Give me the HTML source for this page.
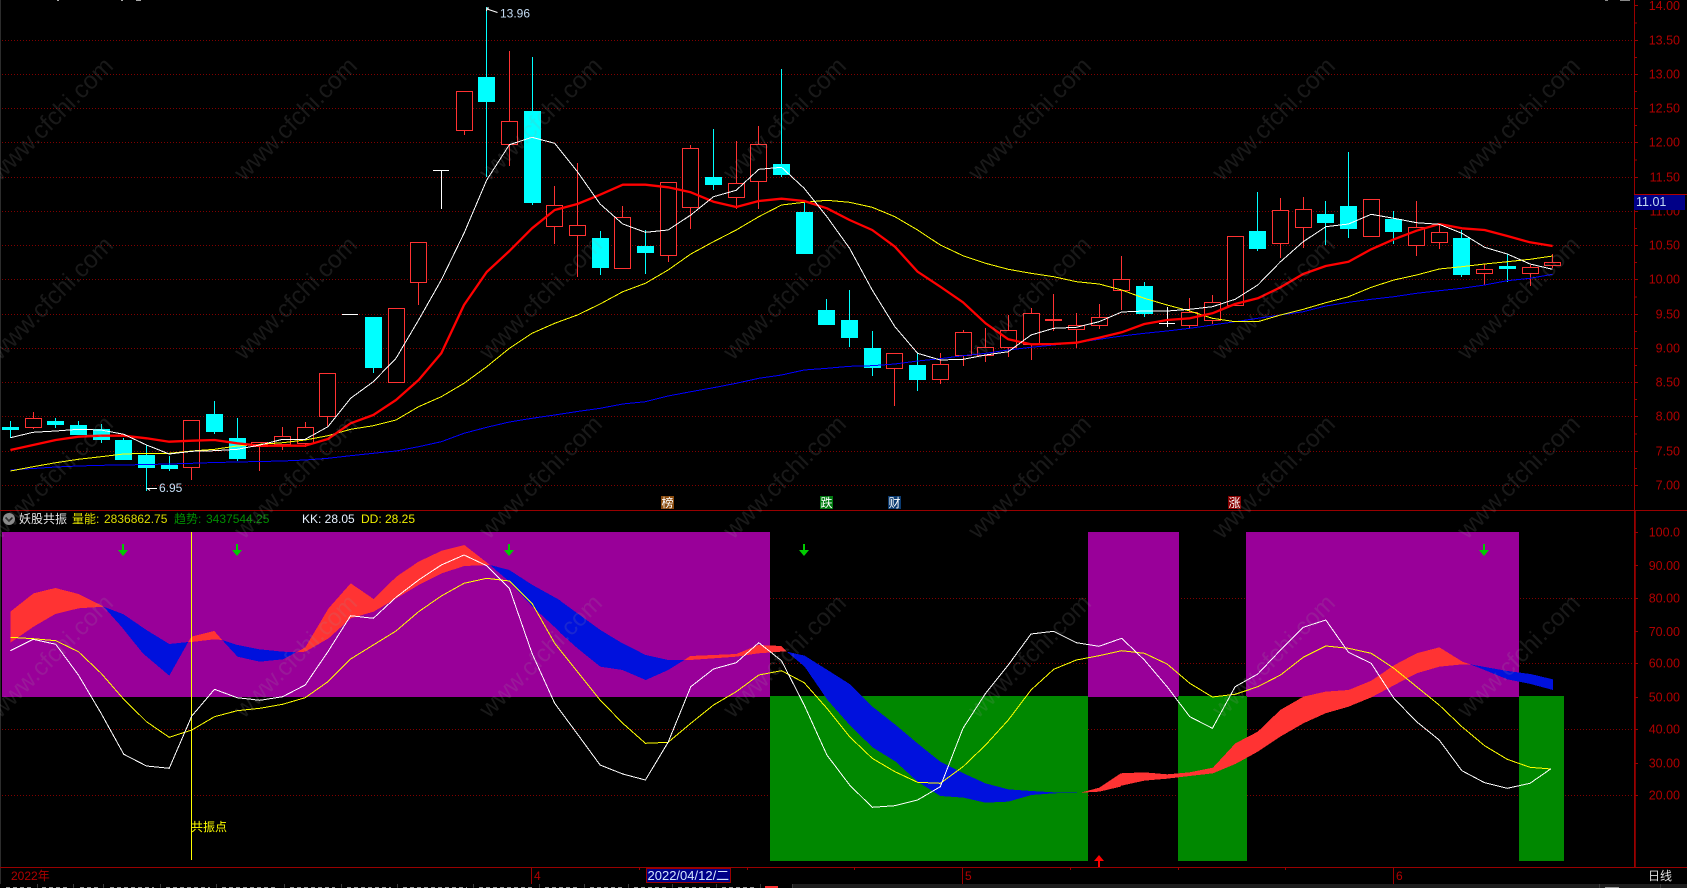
<!DOCTYPE html>
<html lang="zh"><head><meta charset="utf-8"><title>妖股共振</title>
<style>
html,body{margin:0;padding:0;background:#000;width:1687px;height:888px;overflow:hidden}
svg{display:block}
text{font-family:"Liberation Sans","Noto Sans CJK SC",sans-serif;font-size:12px}
.ax text{fill:#b00000;text-anchor:end;font-size:12.5px}
.wm text{font-size:24.5px;fill:#999;opacity:.16}
.ml{fill:none;stroke-linejoin:round}
.thin{shape-rendering:crispEdges}
</style></head><body>
<svg width="1687" height="888" viewBox="0 0 1687 888" xmlns="http://www.w3.org/2000/svg">
<rect width="1687" height="888" fill="#000"/>
<rect x="0" y="0" width="1" height="884" fill="#2c2c2c"/>
<!-- grid -->
<path stroke="#800000" stroke-width="1" stroke-dasharray="1 2" shape-rendering="crispEdges" fill="none" d="M2 40.5H1634M2 74.5H1634M2 108.5H1634M2 142.5H1634M2 177.5H1634M2 211.5H1634M2 245.5H1634M2 279.5H1634M2 314.5H1634M2 348.5H1634M2 382.5H1634M2 416.5H1634M2 451.5H1634M2 485.5H1634M2 598.5H1634M2 663.5H1634M2 729.5H1634M2 795.5H1634"/>
<!-- candles -->
<g shape-rendering="crispEdges">
<path fill="none" stroke="#00ffff" d="M10.5 421V438M55.5 418V428M78.5 421V435M101.5 424V443M123.5 438V460M146.5 445V491M169.5 456V471M214.5 401V434M237.5 418V461M373.5 368V373M486.5 7V177M532.5 57V205M600.5 231V275M645.5 230V274M713.5 129V190M781.5 69V177M804.5 203V212M826.5 299V310M849.5 290V347M872.5 331V376M917.5 353V391M1144.5 282V317M1257.5 192V251M1325.5 201V245M1348.5 152V238M1393.5 211V244M1461.5 230V277M1507.5 254V282"/>
<path fill="none" stroke="#ff3232" d="M33.5 412V429M191.5 420V480M259.5 442V471M282.5 427V450M305.5 422V447M327.5 373V426M418.5 242V305M464.5 91V135M509.5 51V166M554.5 186V244M577.5 163V277M622.5 206V269M668.5 182V262M690.5 145V229M736.5 141V209M758.5 126V209M894.5 353V406M940.5 353V384M963.5 330V366M985.5 328V362M1008.5 315V357M1031.5 308V360M1053.5 294V331M1076.5 313V348M1099.5 304V329M1121.5 256V310M1189.5 298V329M1212.5 295V324M1280.5 198V258M1303.5 197V248M1416.5 201V256M1439.5 223V249M1484.5 264V285M1530.5 265V286M1552.5 254V268"/>
<g fill="#00ffff">
<rect x="2" y="427" width="17" height="3"/><rect x="47" y="421" width="17" height="4"/><rect x="70" y="425" width="17" height="10"/><rect x="93" y="429" width="17" height="11"/><rect x="115" y="440" width="17" height="20"/><rect x="138" y="455" width="17" height="13"/><rect x="161" y="465" width="17" height="4"/><rect x="206" y="414" width="17" height="18"/><rect x="229" y="438" width="17" height="21"/><rect x="365" y="317" width="17" height="51"/><rect x="478" y="77" width="17" height="25"/><rect x="524" y="111" width="17" height="92"/><rect x="592" y="238" width="17" height="30"/><rect x="637" y="246" width="17" height="7"/><rect x="705" y="177" width="17" height="8"/><rect x="773" y="164" width="17" height="11"/><rect x="796" y="212" width="17" height="42"/><rect x="818" y="310" width="17" height="15"/><rect x="841" y="320" width="17" height="18"/><rect x="864" y="348" width="17" height="20"/><rect x="909" y="365" width="17" height="15"/><rect x="1136" y="286" width="17" height="28"/><rect x="1249" y="231" width="17" height="18"/><rect x="1317" y="214" width="17" height="9"/><rect x="1340" y="206" width="17" height="23"/><rect x="1385" y="219" width="17" height="13"/><rect x="1453" y="238" width="17" height="37"/><rect x="1499" y="266" width="17" height="3"/>
</g>
<g fill="#000" stroke="#ff3232">
<rect x="25.5" y="418.5" width="16" height="9"/><rect x="183.5" y="420.5" width="16" height="47"/><rect x="251.5" y="442.5" width="16" height="4"/><rect x="274.5" y="436.5" width="16" height="8"/><rect x="297.5" y="427.5" width="16" height="16"/><rect x="319.5" y="373.5" width="16" height="43"/><rect x="388.5" y="308.5" width="16" height="74"/><rect x="410.5" y="242.5" width="16" height="40"/><rect x="456.5" y="91.5" width="16" height="39"/><rect x="501.5" y="121.5" width="16" height="23"/><rect x="546.5" y="205.5" width="16" height="21"/><rect x="569.5" y="225.5" width="16" height="10"/><rect x="614.5" y="217.5" width="16" height="51"/><rect x="660.5" y="182.5" width="16" height="73"/><rect x="682.5" y="148.5" width="16" height="59"/><rect x="728.5" y="183.5" width="16" height="14"/><rect x="750.5" y="144.5" width="16" height="37"/><rect x="886.5" y="353.5" width="16" height="15"/><rect x="932.5" y="364.5" width="16" height="15"/><rect x="955.5" y="332.5" width="16" height="23"/><rect x="977.5" y="347.5" width="16" height="8"/><rect x="1000.5" y="330.5" width="16" height="17"/><rect x="1023.5" y="313.5" width="16" height="31"/><rect x="1068.5" y="325.5" width="16" height="4"/><rect x="1091.5" y="317.5" width="16" height="8"/><rect x="1113.5" y="279.5" width="16" height="11"/><rect x="1181.5" y="312.5" width="16" height="13"/><rect x="1204.5" y="302.5" width="16" height="18"/><rect x="1227.5" y="236.5" width="16" height="69"/><rect x="1272.5" y="210.5" width="16" height="33"/><rect x="1295.5" y="209.5" width="16" height="18"/><rect x="1363.5" y="199.5" width="16" height="37"/><rect x="1408.5" y="227.5" width="16" height="18"/><rect x="1431.5" y="232.5" width="16" height="10"/><rect x="1476.5" y="269.5" width="16" height="4"/><rect x="1522.5" y="267.5" width="16" height="6"/><rect x="1544.5" y="262.5" width="16" height="3"/>
</g>
<rect x="1045" y="319" width="17" height="2" fill="#ff3232"/>
<path fill="none" stroke="#fff" d="M342 314.5H358M433 170.5H449M441.5 170V209M1167.5 307V327M1159 323.5H1175"/>
</g>
<!-- moving averages -->
<polyline class="ml thin" stroke="#0000ff" stroke-width="1" points="10.4,470 33.1,468.5 55.8,467 78.4,466 101.1,465.3 123.8,465 146.5,464.5 169.2,464 191.8,463.3 214.5,462.5 237.2,462 259.9,461.5 282.6,461 305.2,460 327.9,458.3 350.6,455.7 373.3,453.3 396,451 418.6,446.7 441.3,441.7 464,433.3 486.7,427.3 509.4,422 532,418.3 554.7,415 577.4,411.5 600.1,408.3 622.8,404 645.4,401.7 668.1,396 690.8,391.7 713.5,387.7 736.2,383.3 758.8,378.3 781.5,375 804.2,370 826.9,368.3 849.6,366.3 872.2,365.7 894.9,364 917.6,361 940.3,358.7 963,355.7 985.6,353.3 1008.3,350 1031,347.3 1053.7,345 1076.4,342.7 1099,339.3 1121.7,336 1144.4,333.3 1167.1,331 1189.8,328.3 1212.4,325 1235.1,321.7 1257.8,318.3 1280.5,315 1303.2,311.7 1325.8,306 1348.5,302.3 1371.2,299.3 1393.9,296.7 1416.6,293.3 1439.2,290.7 1461.9,288.3 1484.6,285 1507.3,280.7 1530,278.3 1552.6,274.3"/>
<polyline class="ml thin" stroke="#ffff00" stroke-width="1" points="10.4,471 33.1,466.7 55.8,462.7 78.4,459.3 101.1,456.7 123.8,454 146.5,453.3 169.2,453.3 191.8,451 214.5,449.3 237.2,446 259.9,444.3 282.6,442.7 305.2,440 327.9,435.7 350.6,429.3 373.3,425.7 396,420 418.6,406.7 441.3,396.7 464,383.3 486.7,366.7 509.4,348.3 532,333.3 554.7,323.3 577.4,315 600.1,304 622.8,291.7 645.4,283.3 668.1,270 690.8,254 713.5,241.7 736.2,230 758.8,216.7 781.5,205 804.2,202.3 826.9,200.3 849.6,202.3 872.2,207.3 894.9,216.7 917.6,230 940.3,245 963,255.7 985.6,263.3 1008.3,269.3 1031,273.3 1053.7,276.7 1076.4,281.7 1099,284 1121.7,290 1144.4,298.3 1167.1,305 1189.8,311 1212.4,318.3 1235.1,321.7 1257.8,321.7 1280.5,315 1303.2,309.3 1325.8,302.7 1348.5,296.7 1371.2,287.3 1393.9,280 1416.6,275 1439.2,269 1461.9,266.7 1484.6,264 1507.3,261.7 1530,259.3 1552.6,256"/>
<polyline class="ml" stroke="#ff0000" stroke-width="2.3" points="10.4,450 33.1,445 55.8,440 78.4,436.7 101.1,435.7 123.8,435.7 146.5,438.3 169.2,441.7 191.8,440.7 214.5,440 237.2,443.3 259.9,445.7 282.6,445.7 305.2,445.7 327.9,439 350.6,423.3 373.3,415 396,400 418.6,380 441.3,353.3 464,305 486.7,272 509.4,251 532,228.3 554.7,210 577.4,204 600.1,194.7 622.8,184.7 645.4,184.7 668.1,187.3 690.8,192.3 713.5,201.7 736.2,207 758.8,201 781.5,198.7 804.2,201 826.9,208.3 849.6,220 872.2,230 894.9,246.7 917.6,271.7 940.3,286.7 963,302.3 985.6,323.3 1008.3,339.3 1031,344.3 1053.7,344 1076.4,342.7 1099,337.7 1121.7,332.3 1144.4,324 1167.1,320 1189.8,318.3 1212.4,313.3 1235.1,304 1257.8,298.3 1280.5,287.3 1303.2,274 1325.8,266 1348.5,261.7 1371.2,249.3 1393.9,239.3 1416.6,230.7 1439.2,224 1461.9,228.3 1484.6,230 1507.3,236 1530,242.3 1552.6,246"/>
<polyline class="ml thin" stroke="#ffffff" stroke-width="1" points="10.4,437.7 33.1,432.3 55.8,431 78.4,429.3 101.1,430 123.8,434.3 146.5,445 169.2,454 191.8,451.3 214.5,450.7 237.2,449.3 259.9,445 282.6,439.3 305.2,439.3 327.9,426.7 350.6,398.3 373.3,381.7 396,358.3 418.6,320 441.3,280 464,233.3 486.7,180 509.4,144.7 532,137.3 554.7,143.3 577.4,171.7 600.1,204 622.8,224 645.4,232.3 668.1,230 690.8,215 713.5,196.7 736.2,190.3 758.8,169.3 781.5,167.3 804.2,188.3 826.9,216.7 849.6,248.3 872.2,290 894.9,326.7 917.6,353.3 940.3,360 963,359.3 985.6,355 1008.3,351.7 1031,335 1053.7,328.3 1076.4,327.3 1099,321.7 1121.7,312 1144.4,311 1167.1,311 1189.8,309.3 1212.4,306.7 1235.1,299.3 1257.8,285 1280.5,261.7 1303.2,241.7 1325.8,226.7 1348.5,224 1371.2,214.3 1393.9,218.3 1416.6,222.7 1439.2,224.3 1461.9,233.3 1484.6,247.3 1507.3,254 1530,264 1552.6,269.3"/>
<!-- price labels -->
<text x="500" y="17.5" fill="#c4dcf4">13.96</text>
<path d="M486.5 11L487 8L489 8M487 9L497.5 12.5" fill="none" stroke="#fff" stroke-width="1"/>
<text x="159" y="492" fill="#c4dcf4">6.95</text>
<path d="M151 488.5L147.5 488.5L150 490.5M147.5 488.5H157" fill="none" stroke="#fff" stroke-width="1"/>
<!-- event markers -->
<g shape-rendering="crispEdges">
<rect x="661" y="496" width="13" height="13" fill="#8a4b0e"/><rect x="820" y="496" width="13" height="13" fill="#007a10"/><rect x="888" y="496" width="13" height="13" fill="#0a3a70"/><rect x="1228" y="496" width="13" height="13" fill="#880000"/>
</g>
<g fill="#fff" text-anchor="middle">
<text x="667.5" y="507">榜</text><text x="826.5" y="507">跌</text><text x="894.5" y="507">财</text><text x="1234.5" y="507">涨</text>
</g>
<!-- indicator panel backgrounds -->
<g shape-rendering="crispEdges">
<rect x="2" y="532" width="768" height="165" fill="#990099"/>
<rect x="1088" y="532" width="91" height="165" fill="#990099"/>
<rect x="1246" y="532" width="273" height="165" fill="#990099"/>
<rect x="770" y="696" width="318" height="165" fill="#008800"/>
<rect x="1178" y="696" width="69" height="165" fill="#008800"/>
<rect x="1519" y="696" width="45" height="165" fill="#008800"/>
</g>
<!-- ribbons -->
<g transform="translate(0,510) scale(.35714,.33333)" shape-rendering="crispEdges">
<polygon fill="#ff3333" points="29,305 94,250 155,234 220,252 290,290 220,295 155,312 94,350 29,398"/>
<polygon fill="#0011dd" points="290,290 346,313 410,360 474,402 527,396 474,497 400,430 340,350"/>
<polygon fill="#ff3333" points="527,396 536,380 600,363 622,390 600,388 536,396"/>
<polygon fill="#0011dd" points="622,390 665,405 727,418 792,425 830,427 792,448 727,455 665,440"/>
<polygon fill="#ff3333" points="830,427 855,412 920,295 982,220 1046,267 1110,200 1172,155 1237,122 1300,105 1372,165 1300,168 1237,190 1172,225 1110,265 1046,305 982,325 920,385 855,425"/>
<polygon fill="#0011dd" points="1372,165 1426,180 1491,225 1570,272 1570,368 1491,290 1426,215"/>
</g>
<g transform="translate(560,510) scale(.35714,.33333)" shape-rendering="crispEdges">
<polygon fill="#0011dd" points="0,272 49,310 113,360 175,400 240,435 303,450 348,450 303,480 240,510 175,480 113,470 49,415 0,368"/>
<polygon fill="#ff3333" points="348,450 365,438 430,435 494,432 555,405 620,408 635,425 620,425 555,430 494,440 430,445 365,450"/>
<polygon fill="#0011dd" points="635,425 685,437 749,480 811,522 875,590 940,645 1001,700 1065,755 1130,790 1191,820 1255,838 1320,843 1382,847 1458,848 1382,850 1320,855 1255,875 1191,878 1130,863 1065,858 1001,815 940,755 875,712 811,645 749,570 685,470"/>
<polygon fill="#ff3333" points="1458,848 1510,833 1570,790 1570,830 1510,845"/>
</g>
<g transform="translate(1120,510) scale(.36166,.33333)" shape-rendering="crispEdges">
<polygon fill="#ff3333" points="0,790 67,787 131,793 192,787 257,773 319,700 381,665 443,600 507,560 568,545 632,540 695,512 759,465 820,430 883,412 947,455 968,463 947,463 883,470 820,490 759,525 695,562 632,590 568,610 507,640 443,680 381,725 319,762 257,790 192,798 131,806 67,812 0,828"/>
<polygon fill="#0011dd" points="968,463 1071,483 1135,492 1197,508 1197,540 1135,522 1071,508 1008,480"/>
</g>
<!-- vertical marker -->
<rect x="191" y="532" width="1" height="328" fill="#ffff00"/>
<text x="191" y="831" fill="#ffff00">共振点</text>
<!-- indicator lines -->
<polyline class="ml thin" stroke="#ffff00" stroke-width="1" points="10.4,637.3 33.1,638.7 55.8,640.7 78.4,651.7 101.1,673.3 123.8,699.3 146.5,721.7 169.2,737.3 191.8,730 214.5,716.7 237.2,710.7 259.9,708.3 282.6,704.3 305.2,697.7 327.9,681.7 350.6,659 373.3,645 396,631 418.6,611.7 441.3,596 464,583.3 486.7,578.3 509.4,581 532,603.3 554.7,643.3 577.4,671.7 600.1,700 622.8,723.3 645.4,743.3 668.1,742.3 690.8,723.3 713.5,705 736.2,691.7 758.8,675 781.5,670.7 804.2,682.7 826.9,708.3 849.6,736.7 872.2,758.3 894.9,771.7 917.6,782.3 940.3,783.3 963,766.7 985.6,745 1008.3,720 1031,690 1053.7,669.3 1076.4,660 1099,655.7 1121.7,650.7 1144.4,653.3 1167.1,664 1189.8,683.3 1212.4,697 1235.1,694.3 1257.8,686.7 1280.5,675 1303.2,657.3 1325.8,646 1348.5,648.3 1371.2,653.3 1393.9,668.3 1416.6,686.7 1439.2,705 1461.9,726.7 1484.6,745.7 1507.3,759.3 1530,767.3 1551,769"/>
<polyline class="ml thin" stroke="#ffffff" stroke-width="1" points="10.4,650.7 33.1,639.3 55.8,644.3 78.4,675 101.1,713.3 123.8,754.3 146.5,766 169.2,768.3 191.8,716 214.5,689.3 237.2,697.7 259.9,700.3 282.6,696.7 305.2,685 327.9,651.7 350.6,615.7 373.3,618.3 396,597.3 418.6,580 441.3,565 464,555 486.7,565.7 509.4,588.3 532,653.3 554.7,703.3 577.4,734 600.1,765 622.8,774 645.4,780 668.1,742.3 690.8,686.7 713.5,669 736.2,662.7 758.8,642.7 781.5,660.7 804.2,705 826.9,755 849.6,785 872.2,807.3 894.9,805.7 917.6,800 940.3,786.7 963,728.3 985.6,693.3 1008.3,665 1031,634 1053.7,631.3 1076.4,642.7 1099,646.3 1121.7,638.3 1144.4,660 1167.1,686.7 1189.8,716.7 1212.4,728.3 1235.1,686.7 1257.8,674 1280.5,650 1303.2,627.3 1325.8,620 1348.5,652.3 1371.2,663.3 1393.9,698.3 1416.6,721.7 1439.2,740 1461.9,770.7 1484.6,782.7 1507.3,788.3 1530,783.3 1551,768.7"/>
<!-- arrows -->
<g fill="#00cc00">
<path d="M122 544h2v6h4l-5 6l-5-6h4z"/><path d="M236 544h2v6h4l-5 6l-5-6h4z"/><path d="M508 544h2v6h4l-5 6l-5-6h4z"/><path d="M803 544h2v6h4l-5 6l-5-6h4z"/><path d="M1483 544h2v6h4l-5 6l-5-6h4z"/>
</g>
<path d="M1098 867v-6h-4l5-6l5 6h-4v6z" fill="#ff0000"/>
<!-- header -->
<circle cx="9" cy="519" r="6" fill="#8a8a8a"/><path d="M5.5 517.5L9 521L12.5 517.5" fill="none" stroke="#222" stroke-width="1.6"/>
<text x="19" y="523" fill="#e6e6e6">妖股共振</text>
<text x="72" y="523" fill="#e0e000">量能:</text><text x="104" y="523" fill="#dddd00">2836862.75</text>
<text x="174" y="523" fill="#008c00">趋势:</text><text x="206" y="523" fill="#008c00">3437544.25</text>
<text x="302" y="523" fill="#e8f2ff">KK: 28.05</text><text x="361" y="523" fill="#eeee00">DD: 28.25</text>
<!-- axes & lines -->
<g shape-rendering="crispEdges">
<rect x="0" y="510" width="1687" height="1" fill="#990000"/>
<rect x="0" y="867" width="1687" height="1" fill="#990000"/>
<rect x="1634" y="0" width="1" height="867" fill="#990000"/>
<rect x="1635" y="511" width="1" height="356" fill="#770000"/>
<path stroke="#990000" fill="none" d="M1634 5.5h4M1634 23h3M1634 40.5h4M1634 57.5h3M1634 74.5h4M1634 91.5h3M1634 108.5h4M1634 125.5h3M1634 142.5h4M1634 160h3M1634 177.5h4M1634 194.5h3M1634 211.5h4M1634 228.5h3M1634 245.5h4M1634 262.5h3M1634 279.5h4M1634 297h3M1634 314.5h4M1634 331.5h3M1634 348.5h4M1634 365.5h3M1634 382.5h4M1634 399.5h3M1634 416.5h4M1634 434h3M1634 451.5h4M1634 468.5h3M1634 485.5h4M1634 532.5h4M1634 565.5h4M1634 598.5h4M1634 631.5h4M1634 663.5h4M1634 697.5h4M1634 729.5h4M1634 763.5h4M1634 795.5h4"/>
<path stroke="#990000" fill="none" d="M531.5 868V884M962.5 868V884M1393.5 868V884M639.5 868v2M747.5 868v2M854.5 868v2M1070.5 868v2M1178.5 868v2M1285.5 868v2"/>
</g>
<g class="ax">
<text x="1680" y="10">14.00</text><text x="1680" y="44.5">13.50</text><text x="1680" y="78.5">13.00</text><text x="1680" y="112.5">12.50</text><text x="1680" y="146.5">12.00</text><text x="1680" y="181.5">11.50</text><text x="1680" y="215.5">11.00</text><text x="1680" y="249.5">10.50</text><text x="1680" y="283.5">10.00</text><text x="1680" y="318.5">9.50</text><text x="1680" y="352.5">9.00</text><text x="1680" y="386.5">8.50</text><text x="1680" y="420.5">8.00</text><text x="1680" y="455.5">7.50</text><text x="1680" y="489.5">7.00</text>
<text x="1680" y="536.5">100.0</text><text x="1680" y="570">90.00</text><text x="1680" y="602.5">80.00</text><text x="1680" y="636">70.00</text><text x="1680" y="667.5">60.00</text><text x="1680" y="701.5">50.00</text><text x="1680" y="733.5">40.00</text><text x="1680" y="767.5">30.00</text><text x="1680" y="799.5">20.00</text>
</g>
<rect x="1634" y="194" width="51" height="16" fill="#000088"/><rect x="1634" y="194" width="53" height="1" fill="#b00000"/>
<text x="1636" y="206" fill="#c4dcf4" style="font-size:12.5px">11.01</text>
<!-- time axis -->
<text x="11" y="880" fill="#b00000">2022年</text>
<text x="534" y="880" fill="#b00000">4</text><text x="965" y="880" fill="#b00000">5</text><text x="1396" y="880" fill="#b00000">6</text>
<rect x="646.5" y="868.5" width="84" height="14" fill="#000088" stroke="#990000"/>
<text x="647.5" y="880" fill="#d4e6ff" style="font-size:13px">2022/04/12/二</text>
<text x="1648" y="880" fill="#e0e0e0">日线</text>
<!-- bottom tabs -->
<rect x="792" y="884" width="895" height="4" fill="#1e1e1e"/>
<path stroke="#3a3a3a" fill="none" shape-rendering="crispEdges" d="M37.5 884v4M73.5 884v4M103.5 884v4M160.5 884v4M216.5 884v4M284.5 884v4M341.5 884v4M397.5 884v4M473.5 884v4M539.5 884v4M584.5 884v4M628.5 884v4M672.5 884v4M716.5 884v4M760.5 884v4M792.5 884v4"/>
<path stroke="#999" fill="none" stroke-width="1" stroke-dasharray="4 3" shape-rendering="crispEdges" d="M6 887.5H32M42 887.5H68M80 887.5H98M110 887.5H154M166 887.5H210M222 887.5H278M290 887.5H335M347 887.5H391M403 887.5H467M479 887.5H533M545 887.5H578M590 887.5H622M634 887.5H666M678 887.5H710M722 887.5H754"/>
<rect x="765" y="886" width="13" height="2" fill="#ff3333"/>
<path stroke="#999" fill="none" stroke-width="1" d="M1605 887.5h14"/>
<rect x="1599" y="884" width="1" height="4" fill="#3a3a3a"/><rect x="1660" y="884" width="1" height="4" fill="#3a3a3a"/>
<rect x="1605" y="0" width="3" height="1" fill="#888"/><rect x="1620" y="0" width="10" height="1" fill="#888"/><rect x="57" y="0" width="2" height="1" fill="#aaa"/><rect x="121" y="0" width="2" height="1" fill="#aaa"/><rect x="136" y="0" width="5" height="1" fill="#aaa"/>
<!-- watermarks -->
<g class="wm">
<text transform="translate(0,182) rotate(-45)">www.cfchi.com</text><text transform="translate(244,182) rotate(-45)">www.cfchi.com</text><text transform="translate(489,182) rotate(-45)">www.cfchi.com</text><text transform="translate(733,182) rotate(-45)">www.cfchi.com</text><text transform="translate(978,182) rotate(-45)">www.cfchi.com</text><text transform="translate(1222,182) rotate(-45)">www.cfchi.com</text><text transform="translate(1467,182) rotate(-45)">www.cfchi.com</text>
<text transform="translate(0,361) rotate(-45)">www.cfchi.com</text><text transform="translate(244,361) rotate(-45)">www.cfchi.com</text><text transform="translate(489,361) rotate(-45)">www.cfchi.com</text><text transform="translate(733,361) rotate(-45)">www.cfchi.com</text><text transform="translate(978,361) rotate(-45)">www.cfchi.com</text><text transform="translate(1222,361) rotate(-45)">www.cfchi.com</text><text transform="translate(1467,361) rotate(-45)">www.cfchi.com</text>
<text transform="translate(0,540) rotate(-45)">www.cfchi.com</text><text transform="translate(244,540) rotate(-45)">www.cfchi.com</text><text transform="translate(489,540) rotate(-45)">www.cfchi.com</text><text transform="translate(733,540) rotate(-45)">www.cfchi.com</text><text transform="translate(978,540) rotate(-45)">www.cfchi.com</text><text transform="translate(1222,540) rotate(-45)">www.cfchi.com</text><text transform="translate(1467,540) rotate(-45)">www.cfchi.com</text>
<text transform="translate(0,719) rotate(-45)">www.cfchi.com</text><text transform="translate(244,719) rotate(-45)">www.cfchi.com</text><text transform="translate(489,719) rotate(-45)">www.cfchi.com</text><text transform="translate(733,719) rotate(-45)">www.cfchi.com</text><text transform="translate(978,719) rotate(-45)">www.cfchi.com</text><text transform="translate(1222,719) rotate(-45)">www.cfchi.com</text><text transform="translate(1467,719) rotate(-45)">www.cfchi.com</text>
</g>
</svg>
</body></html>
